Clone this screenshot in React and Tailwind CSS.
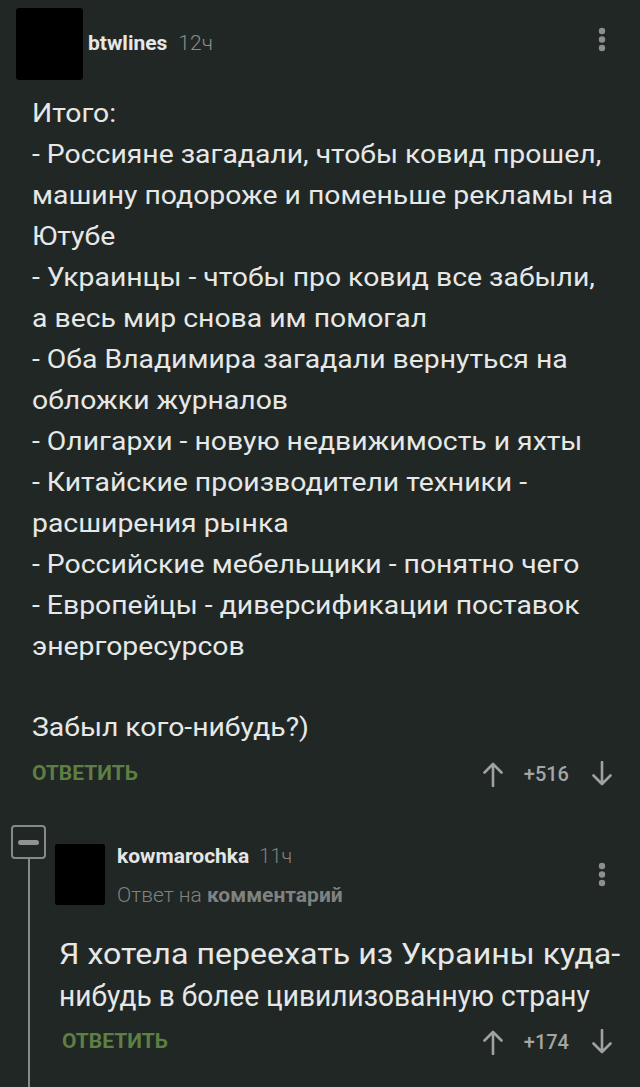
import React, { useLayoutEffect, useRef, useState } from "react";

const mainLines = [
  "Итого:",
  "- Россияне загадали, чтобы ковид прошел,",
  "машину подороже и поменьше рекламы на",
  "Ютубе",
  "- Украинцы - чтобы про ковид все забыли,",
  "а весь мир снова им помогал",
  "- Оба Владимира загадали вернуться на",
  "обложки журналов",
  "- Олигархи - новую недвижимость и яхты",
  "- Китайские производители техники -",
  "расширения рынка",
  "- Российские мебельщики - понятно чего",
  "- Европейцы - диверсификации поставок",
  "энергоресурсов",
];

function FitLine({ text, width }) {
  const ref = useRef(null);
  const [s, setS] = useState(1);
  useLayoutEffect(() => {
    if (ref.current) {
      const w = ref.current.offsetWidth;
      if (w > 0) setS(width / w);
    }
  }, [text, width]);
  return (
    <span ref={ref} className="inline-block origin-left" style={{ transform: `scaleX(${s})` }}>
      {text}
    </span>
  );
}

function Dots() {
  return (
    <svg width="10" height="26" viewBox="0 0 10 26" className="block">
      <circle cx="5" cy="4" r="3.2" fill="#8d8f8e" />
      <circle cx="5" cy="12.5" r="3.2" fill="#8d8f8e" />
      <circle cx="5" cy="21" r="3.2" fill="#8d8f8e" />
    </svg>
  );
}

function UpArrow() {
  return (
    <svg width="22" height="26" viewBox="0 0 22 26" className="block">
      <path d="M11 3 V25 M2.5 11.5 L11 3 L19.5 11.5" stroke="#9fa2a1" strokeWidth="2.6" fill="none" strokeLinecap="round" strokeLinejoin="round" />
    </svg>
  );
}

function DownArrow() {
  return (
    <svg width="22" height="26" viewBox="0 0 22 26" className="block">
      <path d="M11 1 V23 M2.5 14.5 L11 23 L19.5 14.5" stroke="#9fa2a1" strokeWidth="2.6" fill="none" strokeLinecap="round" strokeLinejoin="round" />
    </svg>
  );
}

export default function App() {
  return (
    <div className="w-[640px] h-[1087px] overflow-hidden bg-[#212725] font-['Roboto',sans-serif] text-[#e6e8e7]">
      {/* Comment 1 header */}
      <div className="flex items-start pl-4 pr-[33px] pt-2">
        <div className="w-[67px] h-[72px] bg-black rounded-[3px] shrink-0" />
        <div className="ml-[5px] mt-[20px] flex-1 whitespace-nowrap">
          <span className="text-[21px] font-bold text-[#e6e8e7]">btwlines</span>
          <span className="ml-[11px] text-[21px] font-light text-[#8a8c8b]">12ч</span>
        </div>
        <div className="mt-[19px]">
          <Dots />
        </div>
      </div>

      {/* Comment 1 body */}
      <div className="pl-8 mt-[13px] text-[26px]">
        {mainLines.map((l, i) => (
          <div key={i} className="h-[41px] leading-[41px] whitespace-nowrap">
            <span className="inline-block origin-left scale-x-[1.09]">{l}</span>
          </div>
        ))}
        <div className="mt-[40px] h-[41px] leading-[41px] whitespace-nowrap">
          <span className="inline-block origin-left scale-x-[1.09]">Забыл кого-нибудь?)</span>
        </div>
      </div>

      {/* Actions 1 */}
      <div className="flex items-center pl-8 pr-[27px] mt-[12px] h-[28px]">
        <span className="text-[21px] font-bold text-[#5e7f43]">ОТВЕТИТЬ</span>
        <div className="ml-auto flex items-center">
          <UpArrow />
          <span className="ml-[20px] mr-[22px] text-[20px] font-medium text-[#a3a6a5]">+516</span>
          <DownArrow />
        </div>
      </div>

      {/* Reply */}
      <div className="mt-[37px] flex">
        {/* thread rail */}
        <div className="w-[55px] shrink-0 flex flex-col items-start pl-[11px]">
          <div className="w-[35px] h-[34px] rounded-[4px] border-2 border-[#858988] flex items-center justify-center">
            <div className="w-[21px] h-[5px] rounded-full bg-[#8f9392]" />
          </div>
          <div className="ml-[17px] w-[2px] h-[260px] bg-[#858988]" />
        </div>

        <div className="flex-1 pr-[33px]">
          <div className="flex items-start">
            <div className="mt-[19px] w-[50px] h-[61px] bg-black shrink-0 rounded-[2px]" />
            <div className="ml-[12px] flex-1 whitespace-nowrap">
              <div className="mt-[18px] h-[26px] leading-[26px]">
                <span className="text-[21px] font-bold text-[#e4e6e5]">kowmarochka</span>
                <span className="ml-[10px] text-[20px] font-light text-[#7f8281]">11ч</span>
              </div>
              <div className="mt-[13px] h-[26px] leading-[26px] text-[21px]">
                <span className="font-light text-[#7f8281]">Ответ на </span>
                <span className="font-bold text-[#7f8281]">комментарий</span>
              </div>
            </div>
            <div className="mt-[37px]">
              <Dots />
            </div>
          </div>

          <div className="ml-[4px] mt-[25px] text-[29px]">
            <div className="h-[42px] leading-[42px] whitespace-nowrap">
              <FitLine text="Я хотела переехать из Украины куда-" width={561} />
            </div>
            <div className="h-[42px] leading-[42px] whitespace-nowrap">
              <FitLine text="нибудь в более цивилизованную страну" width={531} />
            </div>
          </div>

          <div className="flex items-center mt-[11px] h-[28px]">
            <span className="ml-[7px] text-[21px] font-bold text-[#5e7f43]">ОТВЕТИТЬ</span>
            <div className="ml-auto mr-[-6px] flex items-center">
              <UpArrow />
              <span className="ml-[20px] mr-[22px] text-[20px] font-medium text-[#a3a6a5]">+174</span>
              <DownArrow />
            </div>
          </div>
        </div>
      </div>
    </div>
  );
}
